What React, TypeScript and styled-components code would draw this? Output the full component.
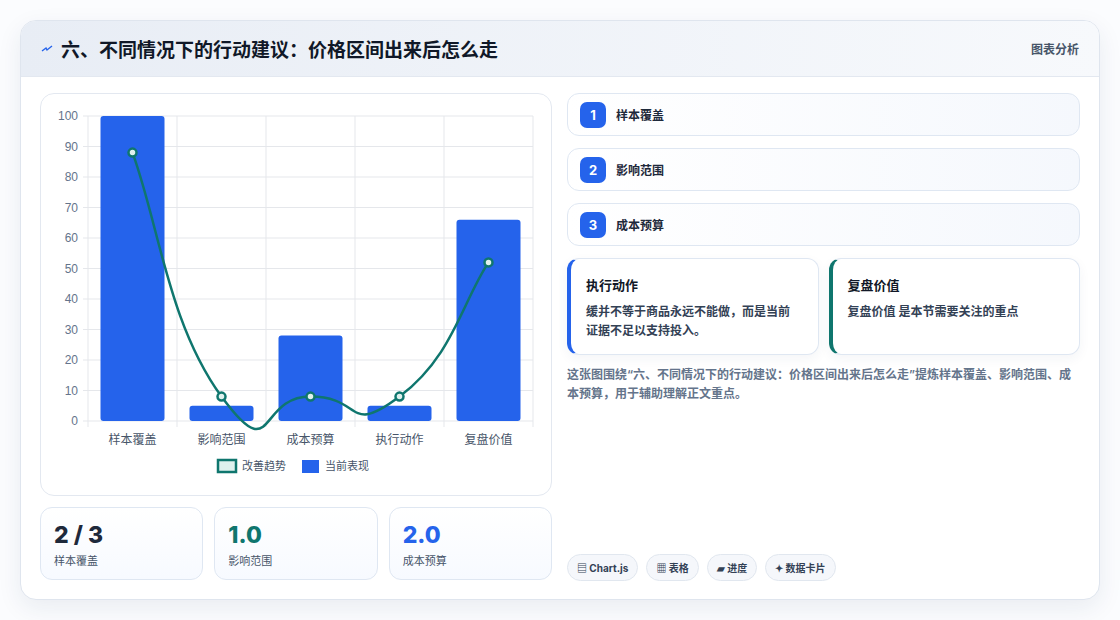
import React from 'react'
import styled, { createGlobalStyle } from 'styled-components'

const Global = createGlobalStyle`
  body { margin: 0; background: #ffffff; font-family: Inter, "Noto Sans CJK SC", sans-serif; }
`

const Page = styled.div`
  width: 1120px;
  height: 620px;
  padding: 20px;
  box-sizing: border-box;
  background: #fbfcfe;
`

const Card = styled.div`
  width: 1080px;
  height: 580px;
  box-sizing: border-box;
  border: 1px solid #dfe5ee;
  border-radius: 16px;
  background: #fff;
  overflow: hidden;
  box-shadow: 0 8px 24px rgba(30, 50, 90, 0.08);
  display: flex;
  flex-direction: column;
`

const Header = styled.div`
  height: 55px;
  flex-shrink: 0;
  display: flex;
  align-items: center;
  justify-content: space-between;
  padding: 0 20px;
  background: linear-gradient(90deg, #e8edf5, #f7f9fc);
  border-bottom: 1px solid #e3e8f0;
`

const Title = styled.h1`
  margin: 0;
  font-size: 19px;
  font-weight: 700;
  color: #101828;
  display: flex;
  align-items: center;
  gap: 8px;
`

const HeadTag = styled.span`
  font-size: 12px;
  font-weight: 600;
  color: #475569;
`

const Body = styled.div`
  flex: 1;
  display: grid;
  grid-template-columns: 512px 1fr;
  gap: 15px;
  padding: 16px 19px 18px 19px;
`

const Left = styled.div`
  display: flex;
  flex-direction: column;
  gap: 11px;
`

const ChartBox = styled.div`
  height: 403px;
  box-sizing: border-box;
  border: 1px solid #e3e8f0;
  border-radius: 14px;
  background: #fff;
`

const Stats = styled.div`
  display: grid;
  grid-template-columns: repeat(3, 1fr);
  gap: 11px;
`

const Stat = styled.div`
  height: 73px;
  box-sizing: border-box;
  border: 1px solid #dfe7f2;
  border-radius: 12px;
  background: linear-gradient(180deg, #fff, #f7faff);
  padding: 12px 13px;
`

const StatValue = styled.div<{ $c: string }>`
  font-size: 23px;
  font-weight: 800;
  color: ${p => p.$c};
  line-height: 30px;
`

const StatLabel = styled.div`
  font-size: 11px;
  color: #475569;
  margin-top: 2px;
`

const Right = styled.div`
  display: flex;
  flex-direction: column;
`

const Steps = styled.div`
  display: flex;
  flex-direction: column;
  gap: 12px;
`

const Step = styled.div`
  height: 43px;
  box-sizing: border-box;
  border: 1px solid #dfe7f2;
  border-radius: 12px;
  background: linear-gradient(90deg, #fff, #f5f8fd);
  display: flex;
  align-items: center;
  gap: 10px;
  padding: 0 12px;
  font-size: 12px;
  font-weight: 600;
  color: #1e293b;
`

const Badge = styled.span`
  width: 26px;
  height: 26px;
  border-radius: 7px;
  background: #2563eb;
  color: #fff;
  font-size: 13px;
  font-weight: 700;
  display: flex;
  align-items: center;
  justify-content: center;
`

const Notes = styled.div`
  display: grid;
  grid-template-columns: 1fr 1fr;
  gap: 10px;
  margin-top: 12px;
`

const Note = styled.div<{ $c: string }>`
  height: 97px;
  box-sizing: border-box;
  border: 1px solid #dfe7f2;
  border-left: 4px solid ${p => p.$c};
  border-radius: 12px;
  background: #fff;
  padding: 16px 16px 0 15px;
  box-shadow: 0 4px 12px rgba(30, 50, 90, 0.05);
`

const NoteTitle = styled.div`
  font-size: 13px;
  font-weight: 700;
  color: #111827;
  margin-bottom: 8px;
`

const NoteText = styled.div`
  font-size: 12px;
  font-weight: 600;
  color: #334155;
  line-height: 19px;
`

const Caption = styled.p`
  margin: 10px 0 0;
  font-size: 12px;
  font-weight: 600;
  color: #64748b;
  line-height: 19px;
`

const Tags = styled.div`
  margin-top: auto;
  display: flex;
  gap: 8px;
`

const Tag = styled.span`
  height: 27px;
  box-sizing: border-box;
  padding: 0 9px;
  border: 1px solid #e1e7ef;
  border-radius: 14px;
  background: #f5f7fb;
  display: flex;
  align-items: center;
  font-size: 10px;
  font-weight: 700;
  color: #334155;
`

const cats = ['样本覆盖', '影响范围', '成本预算', '执行动作', '复盘价值']
const bars = [100, 5, 28, 5, 66]
const line = [88, 8, 8, 8, 52]
const x0 = 47
const x1 = 492
const step = (x1 - x0) / 5
const yOf = (v: number) => 327 - 3.05 * v
const cx = (i: number) => x0 + step * (i + 0.5)

const linePath = () => {
  const pts = line.map((v, i) => [cx(i), yOf(v)])
  let d = `M${pts[0][0]},${pts[0][1]}`
  for (let i = 0; i < pts.length - 1; i++) {
    const p0 = pts[i - 1] || pts[i]
    const p1 = pts[i]
    const p2 = pts[i + 1]
    const p3 = pts[i + 2] || p2
    const t = 0.3
    const c1 = [p1[0] + (p2[0] - p0[0]) * t, p1[1] + (p2[1] - p0[1]) * t]
    const c2 = [p2[0] - (p3[0] - p1[0]) * t, p2[1] - (p3[1] - p1[1]) * t]
    d += ` C${c1[0]},${c1[1]} ${c2[0]},${c2[1]} ${p2[0]},${p2[1]}`
  }
  return d
}

const Chart = () => (
  <svg width="510" height="401" style={{ display: 'block' }}>
    {[0, 10, 20, 30, 40, 50, 60, 70, 80, 90, 100].map(v => (
      <g key={v}>
        <line x1={x0 - 5} x2={x1} y1={yOf(v)} y2={yOf(v)} stroke="#e5e7eb" />
        <text x={x0 - 10} y={yOf(v) + 4} fontSize="12" fill="#64748b" textAnchor="end" fontFamily="Liberation Sans, sans-serif">{v}</text>
      </g>
    ))}
    {[0, 1, 2, 3, 4, 5].map(i => (
      <line key={i} x1={x0 + step * i} x2={x0 + step * i} y1={yOf(100)} y2={yOf(0) + 6} stroke="#e5e7eb" />
    ))}
    {bars.map((v, i) => (
      <rect key={i} x={cx(i) - 32} y={yOf(v)} width="64" height={yOf(0) - yOf(v)} rx="3" fill="#2563eb" />
    ))}
    <path d={linePath()} fill="none" stroke="#0f766e" strokeWidth="2.5" />
    {line.map((v, i) => (
      <circle key={i} cx={cx(i)} cy={yOf(v)} r="4" fill="#dff1ee" stroke="#0f766e" strokeWidth="2.5" />
    ))}
    {cats.map((c, i) => (
      <text key={c} x={cx(i)} y="350" fontSize="12" fill="#475569" textAnchor="middle">{c}</text>
    ))}
    <rect x="177" y="366" width="18" height="12" fill="#dff1ee" stroke="#0f766e" strokeWidth="2.5" />
    <text x="201" y="376" fontSize="11" fill="#475569">改善趋势</text>
    <rect x="261" y="366" width="17" height="13" fill="#2563eb" />
    <text x="284" y="376" fontSize="11" fill="#475569">当前表现</text>
  </svg>
)

export default function App() {
  return (
    <>
      <Global />
      <Page>
        <Card>
          <Header>
            <Title>
              <svg width="12" height="10" viewBox="0 0 12 10">
                <path d="M1 7 L5 4 L6 6 L11 2" fill="none" stroke="#2563eb" strokeWidth="1.4" />
              </svg>
              六、不同情况下的行动建议：价格区间出来后怎么走
            </Title>
            <HeadTag>图表分析</HeadTag>
          </Header>
          <Body>
            <Left>
              <ChartBox>
                <Chart />
              </ChartBox>
              <Stats>
                <Stat><StatValue $c="#1e293b">2 / 3</StatValue><StatLabel>样本覆盖</StatLabel></Stat>
                <Stat><StatValue $c="#0f766e">1.0</StatValue><StatLabel>影响范围</StatLabel></Stat>
                <Stat><StatValue $c="#2563eb">2.0</StatValue><StatLabel>成本预算</StatLabel></Stat>
              </Stats>
            </Left>
            <Right>
              <Steps>
                {['样本覆盖', '影响范围', '成本预算'].map((s, i) => (
                  <Step key={s}><Badge>{i + 1}</Badge>{s}</Step>
                ))}
              </Steps>
              <Notes>
                <Note $c="#2563eb">
                  <NoteTitle>执行动作</NoteTitle>
                  <NoteText>缓并不等于商品永远不能做，而是当前证据不足以支持投入。</NoteText>
                </Note>
                <Note $c="#0f766e">
                  <NoteTitle>复盘价值</NoteTitle>
                  <NoteText>复盘价值 是本节需要关注的重点</NoteText>
                </Note>
              </Notes>
              <Caption>这张图围绕“六、不同情况下的行动建议：价格区间出来后怎么走”提炼样本覆盖、影响范围、成本预算，用于辅助理解正文重点。</Caption>
              <Tags>
                <Tag>▤ Chart.js</Tag>
                <Tag>▦ 表格</Tag>
                <Tag>▰ 进度</Tag>
                <Tag>✦ 数据卡片</Tag>
              </Tags>
            </Right>
          </Body>
        </Card>
      </Page>
    </>
  )
}
